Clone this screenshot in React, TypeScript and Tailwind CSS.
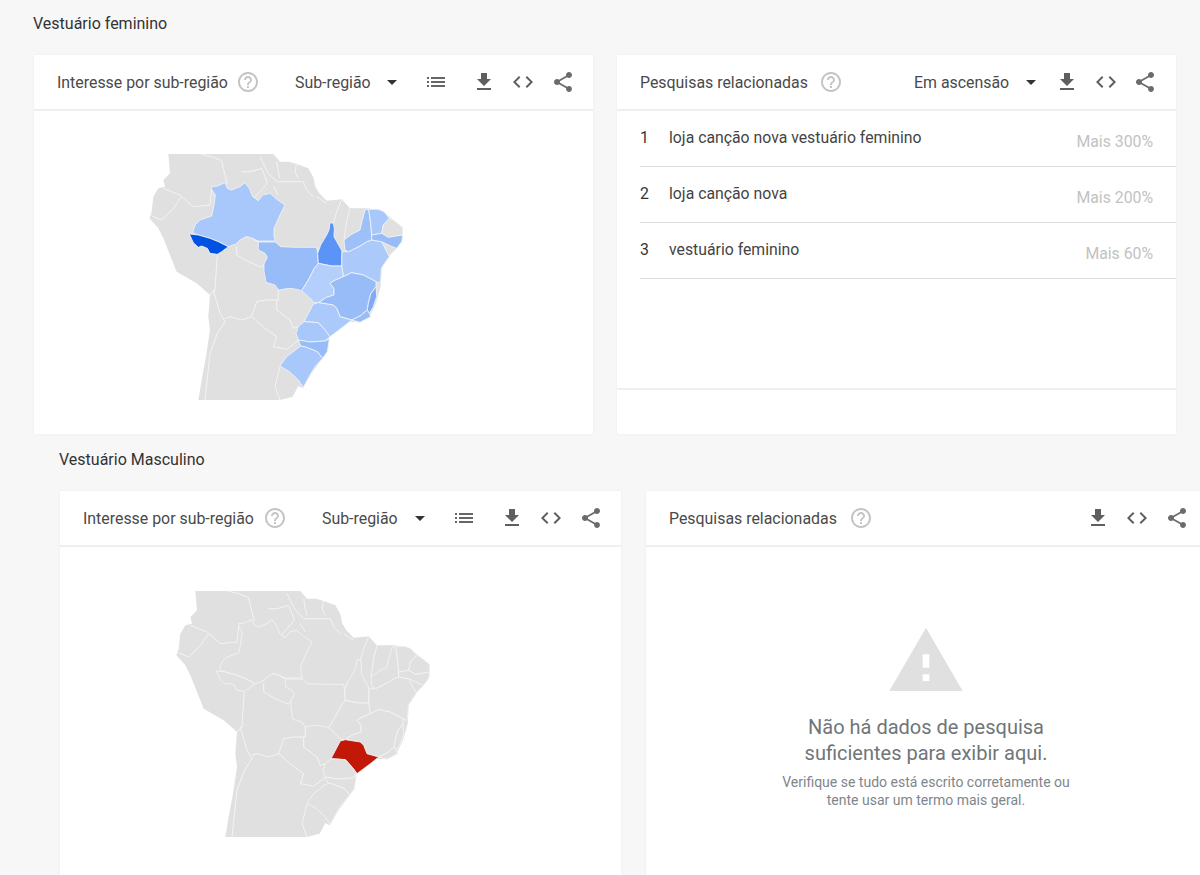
const icons = {
  help: 'M11 18h2v-2h-2v2zm1-16C6.48 2 2 6.48 2 12s4.48 10 10 10 10-4.48 10-10S17.52 2 12 2zm0 18c-4.41 0-8-3.59-8-8s3.59-8 8-8 8 3.59 8 8-3.59 8-8 8zm0-14c-2.21 0-4 1.79-4 4h2c0-1.1.9-2 2-2s2 .9 2 2c0 2-3 1.75-3 5h2c0-2.25 3-2.5 3-5 0-2.21-1.79-4-4-4z',
  download: 'M19 9h-4V3H9v6H5l7 7 7-7zM5 18v2h14v-2H5z',
  code: 'M9.4 16.6L4.8 12l4.6-4.6L8 6l-6 6 6 6 1.4-1.4zm5.2 0l4.6-4.6-4.6-4.6L16 6l6 6-6 6-1.4-1.4z',
  share:
    'M18 16.08c-.76 0-1.44.3-1.96.77L8.91 12.7c.05-.23.09-.46.09-.7s-.04-.47-.09-.7l7.05-4.11c.54.5 1.25.81 2.04.81 1.66 0 3-1.34 3-3s-1.34-3-3-3-3 1.34-3 3c0 .24.04.47.09.7L8.04 9.81C7.5 9.31 6.79 9 6 9c-1.66 0-3 1.34-3 3s1.34 3 3 3c.79 0 1.5-.31 2.04-.81l7.12 4.16c-.05.21-.08.43-.08.65 0 1.61 1.31 2.92 2.92 2.92 1.61 0 2.92-1.31 2.92-2.92s-1.31-2.92-2.92-2.92z',
  list: 'M3 13h2v-2H3v2zm0 4h2v-2H3v2zm0-8h2V7H3v2zm4 4h14v-2H7v2zm0 4h14v-2H7v2zM7 7v2h14V7H7z',
  drop: 'M7 10l5 5 5-5z',
  warning: 'M1 21h22L12 2 1 21zm12-3h-2v-2h2v2zm0-4h-2v-4h2v4z',
};

function Icon({ d, className }: { d: string; className: string }) {
  return (
    <svg viewBox="0 0 24 24" className={`block size-6 shrink-0 fill-current ${className}`} aria-hidden="true">
      <path d={d} />
    </svg>
  );
}

// map coordinates are a 3x grid of the 290x270 drawing
const outline =
  '115,42 430,42 450,65 478,65 500,72 535,85 550,112 556,140 568,160 590,182 635,178 660,205 715,205 760,215 790,240 818,265 818,300 800,325 780,345 765,370 755,385 752,440 738,490 718,530 690,547 660,545 620,570 598,590 592,635 570,665 545,700 518,745 505,738 488,770 450,780 205,780 215,720 228,650 240,570 235,530 240,465 200,430 140,395 120,345 100,295 85,265 58,235 65,215 70,170 85,145 105,140 100,120 120,100';

const states: Record<string, string> = {
  am: '245,140 262,138 285,128 292,145 305,150 330,140 345,128 358,145 368,170 385,182 398,165 420,160 440,178 465,195 450,225 432,265 432,290 436,303 385,303 362,293 348,290 330,300 318,312 295,320 265,305 240,295 205,285 188,278 195,255 210,240 245,228 252,195 256,165 245,148',
  ac: '178,282 205,285 240,295 265,305 295,320 275,335 262,343 240,340 232,325 215,318 205,322 190,308',
  mt: '385,306 436,306 452,320 500,322 560,322 563,340 565,370 553,385 535,420 515,452 500,448 478,445 445,450 435,435 408,427 402,395 402,372 412,352 405,340 385,330',
  to: '600,248 610,250 613,265 612,290 622,308 636,333 635,378 605,378 565,370 563,340 572,315 590,285 597,270',
  ba: '636,335 655,335 690,318 710,305 725,300 755,305 770,335 778,350 762,372 754,385 752,420 748,430 738,425 700,405 665,398 640,410 635,378',
  pi: '642,300 665,283 690,270 697,240 705,210 716,208 722,250 725,285 725,300 710,305 690,318 655,335 645,330',
  ce: '716,208 745,208 762,215 778,235 760,255 755,280 725,285 722,250',
  rn: '778,235 790,240 818,262 818,285 775,292 755,280 760,255',
  pe: '725,285 755,280 775,292 818,285 815,305 800,325 782,318 755,305 725,300',
  go: '565,370 605,378 635,378 640,410 612,422 600,430 612,445 612,465 590,472 565,488 553,488 535,470 515,452 535,420 553,385',
  mg: '640,410 665,398 700,405 738,425 738,440 722,462 715,490 712,510 690,528 665,540 630,530 620,505 610,495 565,488 590,472 612,465 612,445 600,430 612,422',
  es: '738,440 740,470 730,500 718,520 712,510 715,490 722,462',
  rj: '665,540 690,528 712,510 718,520 722,530 690,547',
  sp: '550,492 565,488 610,495 620,505 630,530 665,540 640,560 600,590 585,570 565,548 522,545',
  pr: '505,560 522,545 565,548 585,570 600,590 585,603 540,606 505,600 498,580',
  sc: '505,600 540,606 585,603 598,597 592,635 578,655 562,635 530,622 512,618',
  rs: '512,618 530,622 562,635 578,655 555,680 540,705 520,742 505,720 478,695 450,678 470,650',
};

const borders = [
  '212,42 245,50 275,62 280,85 292,132',
  '335,95 360,95 395,85 405,110 412,130 372,175',
  '390,50 415,100 440,125 480,125 520,125 530,150 550,170',
  '440,65 445,95 450,115',
  '500,70 495,95 505,115',
  '430,140 445,165',
  '635,180 620,215 610,250',
  '660,205 650,245 642,300',
  '100,145 150,165 190,200 240,195 245,148',
  '155,170 130,205 95,240 60,225',
  '262,345 258,400 255,450 240,465',
  '320,318 320,345 355,365 395,382 402,372',
  '345,290 362,293 385,306',
  '445,450 445,480 410,480 380,485 365,530 405,565 440,590 430,620 470,628 505,600',
  '250,450 270,520 285,545 262,580 240,640 225,780',
  '285,535 300,530 335,540 365,530',
  '440,480 440,510 480,540 490,565 505,560',
  '450,680 435,740 450,780',
  '560,170 590,190',
  '770,262 818,268',
  '770,275 815,275',
];

function BrazilMap({ fills }: { fills: Record<string, string> }) {
  return (
    <svg width="290" height="270" viewBox="0 0 870 810" className="block blur-[0.4px]" aria-hidden="true">
      <polygon points={outline} fill="#e0e0e0" />
      {borders.map((points) => (
        <polyline key={points} points={points} fill="none" stroke="#f4f4f4" strokeWidth="3" />
      ))}
      {Object.entries(states).map(([id, points]) => (
        <polygon key={id} points={points} fill={fills[id] ?? '#e0e0e0'} stroke="#f4f4f4" strokeWidth="2.5" strokeLinejoin="round" />
      ))}
    </svg>
  );
}

const blueMap = {
  am: '#a8c7fa',
  ac: '#0053e2',
  mt: '#97bcf8',
  to: '#5b94f6',
  ba: '#abc9fb',
  pi: '#9dc0f9',
  ce: '#a8c7fa',
  pe: '#97bcf8',
  go: '#b4cffb',
  mg: '#97bcf8',
  es: '#7eaaf7',
  rj: '#97bcf8',
  sp: '#abc9fb',
  pr: '#a8c7fa',
  sc: '#97bcf8',
  rs: '#a8c7fa',
};

const redMap = { sp: '#c21807' };

const cardText = 'pt-[2px] text-[15.9px] text-[#4a4a4a]';

function ActionIcons({ share = 'ml-[15px]' }: { share?: string }) {
  return (
    <>
      <Icon d={icons.code} className="ml-[15px] text-[#5f5f5f]" />
      <Icon d={icons.share} className={`${share} text-[#6b6b6b]`} />
    </>
  );
}

function RegionCard({ width, textWidth, selectWidth, pad, fills }: {
  width: string;
  textWidth: string;
  selectWidth: string;
  pad: string;
  fills: Record<string, string>;
}) {
  return (
    <section className={`${width} h-full shrink-0 bg-white shadow-[0_0_2px_rgb(0_0_0_/_6%)]`}>
      <header className="flex h-[56px] items-center border-b-2 border-[#efefef] pl-[23px]">
        <span className={`${cardText} ${textWidth} whitespace-nowrap`}>Interesse por sub-região</span>
        <Icon d={icons.help} className="ml-[9px] text-[#c4c4c4]" />
        <span className={`${cardText} ml-[35px] ${selectWidth} whitespace-nowrap`}>Sub-região</span>
        <Icon d={icons.drop} className="ml-[10px] text-[#333333]" />
        <Icon d={icons.list} className="ml-[20px] text-[#666666]" />
        <Icon d={icons.download} className="ml-[24px] text-[#5f5f5f]" />
        <ActionIcons share="ml-[16px]" />
      </header>
      <div className={pad}>
        <BrazilMap fills={fills} />
      </div>
    </section>
  );
}

const related = [
  { term: 'loja canção nova vestuário feminino', value: 'Mais 300%' },
  { term: 'loja canção nova', value: 'Mais 200%' },
  { term: 'vestuário feminino', value: 'Mais 60%' },
];

function RelatedCard() {
  return (
    <section className="flex h-full w-[559px] shrink-0 flex-col bg-white shadow-[0_0_2px_rgb(0_0_0_/_6%)]">
      <header className="flex h-[56px] items-center border-b-2 border-[#efefef] pl-[23px]">
        <span className={`${cardText} w-[168px] whitespace-nowrap`}>Pesquisas relacionadas</span>
        <Icon d={icons.help} className="ml-[11px] text-[#c4c4c4]" />
        <span className={`${cardText} ml-[71px] w-[95px] whitespace-nowrap`}>Em ascensão</span>
        <Icon d={icons.drop} className="ml-[10px] text-[#333333]" />
        <Icon d={icons.download} className="ml-[12px] text-[#5f5f5f]" />
        <ActionIcons />
      </header>
      <ol className="h-[279px] border-b-2 border-[#efefef] pl-[23px]">
        {related.map((row, index) => (
          <li key={row.term} className="flex h-[56px] border-b border-[#dfdfdf] pr-[23px]">
            <span className="mt-[17px] w-[29px] text-[15.8px] leading-[20px] text-[#333333]">{index + 1}</span>
            <span className="mt-[17px] text-[15.8px] leading-[20px] text-[#444444]">{row.term}</span>
            <span className="mt-[21px] ml-auto text-[15.8px] leading-[20px] text-[#c2c2c2]">{row.value}</span>
          </li>
        ))}
      </ol>
    </section>
  );
}

function EmptyRelatedCard() {
  return (
    <section className="h-full w-[560px] shrink-0 bg-white shadow-[0_0_2px_rgb(0_0_0_/_6%)]">
      <header className="flex h-[56px] items-center border-b-2 border-[#efefef] pl-[23px]">
        <span className={`${cardText} w-[169px] whitespace-nowrap`}>Pesquisas relacionadas</span>
        <Icon d={icons.help} className="ml-[11px] text-[#c4c4c4]" />
        <Icon d={icons.download} className="ml-[213px] text-[#5f5f5f]" />
        <ActionIcons share="ml-[16px]" />
      </header>
      <div className="flex flex-col items-center pt-[74px] text-center">
        <svg viewBox="0 0 24 24" className="block size-20 fill-[#e0e0e0]" aria-hidden="true">
          <path d={icons.warning} />
        </svg>
        <p className="mt-[13px] text-[20px] leading-[26px] text-[#70757a]">
          Não há dados de pesquisa
          <br />
          suficientes para exibir aqui.
        </p>
        <p className="mt-[7px] text-[14px] leading-[18px] text-[#80868b]">
          Verifique se tudo está escrito corretamente ou
          <br />
          tente usar um termo mais geral.
        </p>
      </div>
    </section>
  );
}

export default function App() {
  return (
    <div className="h-[875px] w-[1200px] overflow-hidden bg-[#f7f7f7] font-['Roboto',sans-serif]">
      <div className="pt-[15px] pl-[33px] text-[16px] leading-[18px] text-[#333333]">Vestuário feminino</div>
      <div className="mt-[22px] flex h-[379px] gap-[24px] pl-[34px]">
        <RegionCard width="w-[559px]" textWidth="w-[170px]" selectWidth="w-[75px]" pad="pt-[29px] pl-[96px]" fills={blueMap} />
        <RelatedCard />
      </div>
      <div className="pt-[17px] pl-[59px] text-[16px] leading-[18px] text-[#333333]">Vestuário Masculino</div>
      <div className="mt-[22px] flex h-[384px] gap-[25px] pl-[60px]">
        <RegionCard width="w-[561px]" textWidth="w-[171px]" selectWidth="w-[76px]" pad="pt-[30px] pl-[97px]" fills={redMap} />
        <EmptyRelatedCard />
      </div>
    </div>
  );
}
